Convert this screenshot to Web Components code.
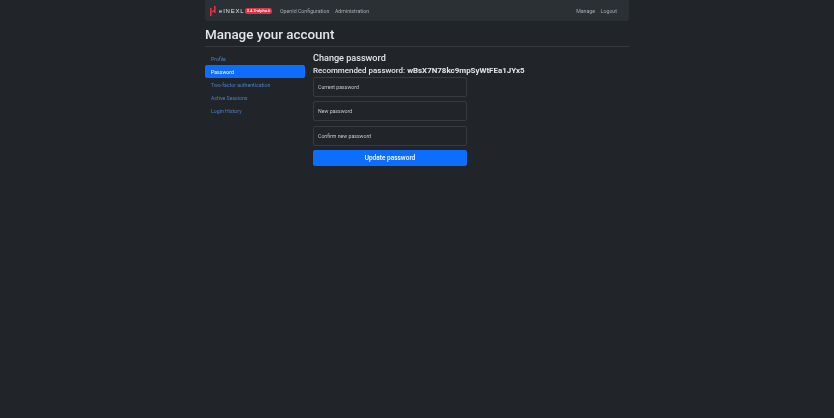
<!doctype html>
<html>
<head>
<meta charset="utf-8">
<title>Manage your account</title>
<style>
  html, body { margin: 0; background: #212529; height: 100%; }
  body { font-family: Roboto, "Open Sans", sans-serif; color: #dee2e6; overflow: hidden; }
</style>
</head>
<body>
<app-shell>
  <top-nav version="3.4.3-alpha.6"></top-nav>
  <h1 slot="title">Manage your account</h1>
  <side-menu slot="menu"></side-menu>
  <password-form slot="main"></password-form>
</app-shell>

<script>
  class AppShell extends HTMLElement {
    constructor() {
      super();
      this.attachShadow({ mode: 'open' }).innerHTML = `
  <style>
  :host { display: block; width: 424px; margin: 0 auto; filter: blur(.25px); }
  .title { padding: 6px 0 3px 0; border-bottom: 1px solid #373b3e; }
  ::slotted(h1) { margin: 0; font-size: 13.4px; line-height: 16px; font-weight: 500; color: #e4e7ea; }
  .cols { display: grid; grid-template-columns: 100px 1fr; column-gap: 8px; padding-top: 5px; }
  </style>
  <slot></slot>
  <div class="title"><slot name="title"></slot></div>
  <div class="cols">
    <slot name="menu"></slot>
    <slot name="main"></slot>
  </div>`;
    }
  }

  class TopNav extends HTMLElement {
    constructor() {
      super();
      const version = this.getAttribute('version');
      this.attachShadow({ mode: 'open' }).innerHTML = `
  <style>
  :host { display: flex; align-items: center; height: 21px; background: #2b3035; border-radius: 0 0 3px 3px; font-size: 5.25px; color: #a7acb1; }
  .brand { display: flex; align-items: center; margin-left: 5px; }
  .brand svg { display: block; }
  .word { margin-left: 3px; width: 24px; font: 6px "Liberation Sans", sans-serif; letter-spacing: .8px; color: #dee2e6; }
  .badge { margin-left: 2px; width: 27px; text-align: center; background: #dc3545; color: #fff; font-size: 4px; font-weight: 500; line-height: 6px; border-radius: 2.5px; }
  nav { display: flex; gap: 5.5px; margin-left: 8px; }
  .right { margin-left: auto; margin-right: 12px; }
  </style>
  <div class="brand">
    <svg width="6" height="10" viewBox="0 0 6 10">
      <path d="M0 2h1.6v8H0zM4 0h1.6v7H4z" fill="#dc3545"/>
      <path d="M1.6 5.5L4 3.8v1.6L1.6 7z" fill="#dc3545"/>
    </svg>
    <span class="word">eINEXL</span>
    <span class="badge">${version}</span>
  </div>
  <nav><span>OpenId Configuration</span><span>Administration</span></nav>
  <nav class="right"><span>Manage</span><span>Logout</span></nav>`;
    }
  }

  class SideMenu extends HTMLElement {
    constructor() {
      super();
      const items = ['Profile', 'Password', 'Two-factor authentication', 'Active Sessions', 'Login History'];
      this.attachShadow({ mode: 'open' }).innerHTML = `
  <style>
  :host { display: flex; flex-direction: column; font-size: 5.2px; color: #4d7fc4; }
  a { display: block; height: 13px; line-height: 14px; padding-left: 6px; border-radius: 2px; }
  a.active { background: #0d6efd; color: #fff; }
  </style>
  ${items.map((t, i) => `<a class="${i === 1 ? 'active' : ''}">${t}</a>`).join('')}`;
    }
  }

  class FloatField extends HTMLElement {
    constructor() {
      super();
      this.attachShadow({ mode: 'open' }).innerHTML = `
  <style>
  :host { display: flex; align-items: center; height: 18px; padding-left: 4px; border: 1px solid #373b3e; border-radius: 2px; font-size: 5.2px; color: #c4c8cc; }
  </style>
  <slot></slot>`;
    }
  }

  class PasswordForm extends HTMLElement {
    constructor() {
      super();
      this.attachShadow({ mode: 'open' }).innerHTML = `
  <style>
  :host { display: block; color: #e4e7ea; }
  h3 { margin: 0; font-size: 9.1px; line-height: 12px; font-weight: 500; }
  h4 { margin: 0; font-size: 7.95px; line-height: 12px; font-weight: 500; padding-top: 1px; white-space: nowrap; }
  b { font-weight: 700; }
  form { width: 154px; display: flex; flex-direction: column; gap: 4.3px; }
  button { height: 16px; padding: 0; border: 0; background: #0d6efd; color: #fff; border-radius: 2px; font: 500 6.5px Roboto, sans-serif; }
  </style>
  <h3>Change password</h3>
  <h4>Recommended password: <b>wBsX7N78kc9mpSyWtFEa1JYx5</b></h4>
  <form>
    <float-field>Current password</float-field>
    <float-field>New password</float-field>
    <float-field>Confirm new password</float-field>
    <button type="button">Update password</button>
  </form>`;
    }
  }

  customElements.define('app-shell', AppShell);
  customElements.define('top-nav', TopNav);
  customElements.define('side-menu', SideMenu);
  customElements.define('float-field', FloatField);
  customElements.define('password-form', PasswordForm);
</script>
</body>
</html>
